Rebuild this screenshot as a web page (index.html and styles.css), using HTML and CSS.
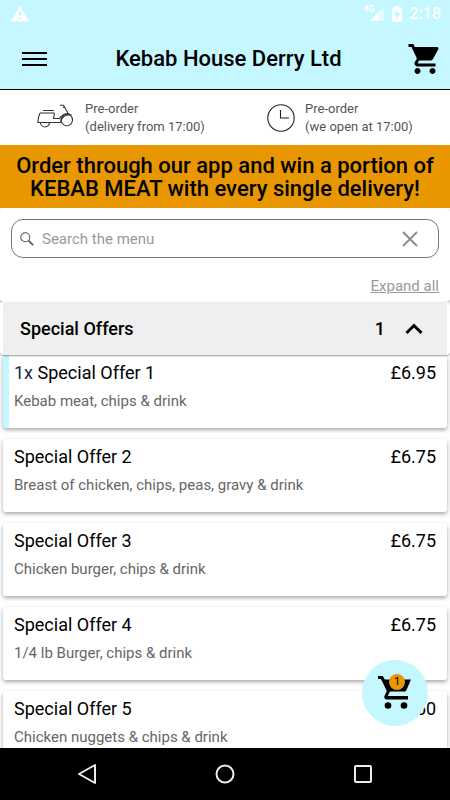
FILE: index.html
```html
<!DOCTYPE html>
<html lang="en">
<head>
<meta charset="utf-8">
<meta name="viewport" content="width=device-width, initial-scale=1">
<title>Kebab House Derry Ltd</title>
<link rel="stylesheet" href="styles.css">
</head>
<body>
<header class="top">
  <div class="status">
    <svg class="status-warning" width="18" height="16" viewBox="0 0 18 16" aria-hidden="true"><path fill="#fff" fill-rule="evenodd" d="M9 0l9 15.500H0zM8 5v5h2V5zm0 6.500v2h2v-2z"/></svg>
    <span class="network">4G</span>
    <svg class="status-signal" width="15" height="14" viewBox="0 0 15 14" aria-hidden="true"><path fill="#fff" opacity=".5" d="M15 0v14H1z"/><path fill="#fff" d="M10 5v9H1z"/></svg>
    <svg class="status-battery" width="10" height="16" viewBox="0 0 10 16" aria-hidden="true"><path fill="#fff" fill-rule="evenodd" d="M3 0h4v1.500h3V16H0V1.500h3zM6 3L1.800 9.300h2.700v4.400l3.900-6.400H6z"/></svg>
    <span class="clock">2:18</span>
  </div>
  <div class="appbar">
    <button class="icon-button" type="button" aria-label="Menu">
      <svg width="28" height="16" viewBox="0 0 28 16"><path stroke="#000" stroke-width="1.800" d="M0 2h25M0 8h25M0 14h25"/></svg>
    </button>
    <h1>Kebab House Derry Ltd</h1>
    <button class="icon-button cart" type="button" aria-label="Basket">
      <svg width="36" height="36" viewBox="0 0 24 24"><path d="M7 18c-1.100 0-1.990.9-1.990 2S5.900 22 7 22s2-.9 2-2-.9-2-2-2zM1 2v2h2l3.600 7.590-1.350 2.450c-.16.28-.25.61-.25.96 0 1.100.9 2 2 2h12v-2H7.420c-.14 0-.25-.11-.25-.25l.03-.12.9-1.630h7.450c.75 0 1.410-.41 1.750-1.030l3.580-6.490A1 1 0 0 0 20 4H5.210l-.94-2H1zm16 16c-1.100 0-1.990.9-1.990 2s.89 2 1.990 2 2-.9 2-2-.9-2-2-2z"/></svg>
    </button>
  </div>
</header>
<main class="content">
  <section class="times">
    <div class="time">
      <svg width="38" height="28" viewBox="0 0 38 28" fill="none" stroke="#333" stroke-width="1.100" aria-hidden="true"><path d="M6 6.500h11M3 9h14.500M3 9C1.500 12 1 15 .8 18.500h3M17.500 9l-1 5.500H22M12.500 18.500h11.300c0-5 4.200-8.500 11-7.500M22 15c2-3.500 6-5.800 10.500-5.500M23 1.200h3.500l4.500 8M26 3.500h2.500"/><path d="M3.500 18.500a4.500 4.500 0 0 0 9 0z"/><circle cx="29.800" cy="16" r="5.700"/></svg>
      <p>Pre-order<br>(delivery from 17:00)</p>
    </div>
    <div class="time">
      <svg width="28" height="28" viewBox="0 0 28 28" fill="none" stroke="#222" stroke-width="1.100" aria-hidden="true"><circle cx="14" cy="14" r="13.200"/><path d="M13.500 6v8H22"/></svg>
      <p>Pre-order<br>(we open at 17:00)</p>
    </div>
  </section>
  <p class="banner">Order through our app and win a portion of KEBAB MEAT with every single delivery!</p>
  <div class="tools">
    <form class="search" role="search">
      <svg width="14" height="14" viewBox="0 0 16 16" fill="none" stroke="#555" stroke-width="1.200" aria-hidden="true"><circle cx="6" cy="6" r="5.200"/><path stroke-width="1.800" d="M9.800 9.800L15 15"/></svg>
      <input type="text" placeholder="Search the menu" aria-label="Search the menu">
      <button class="icon-button" type="reset" aria-label="Clear search">
        <svg width="16" height="16" viewBox="0 0 16 16"><path stroke="#8a8a8a" stroke-width="1.800" d="M1 1l14 14M15 1L1 15"/></svg>
      </button>
    </form>
    <a class="expand" href="#offers">Expand all</a>
  </div>
  <section class="category" id="offers">
    <h2><button class="category-toggle" type="button" aria-expanded="true">
      <span class="category-name">Special Offers</span>
      <span>1</span>
      <svg width="18" height="12" viewBox="0 0 18 12" fill="none" aria-hidden="true"><path stroke="#000" stroke-width="3" d="M1.500 10L9 2.500l7.500 7.500"/></svg>
    </button></h2>
    <ul class="items">
      <li class="item selected">
        <div class="line"><h3><span class="qty">1x</span> Special Offer 1</h3><span>£6.95</span></div>
        <p>Kebab meat, chips &amp; drink</p>
      </li>
      <li class="item">
        <div class="line"><h3>Special Offer 2</h3><span>£6.75</span></div>
        <p>Breast of chicken, chips, peas, gravy &amp; drink</p>
      </li>
      <li class="item">
        <div class="line"><h3>Special Offer 3</h3><span>£6.75</span></div>
        <p>Chicken burger, chips &amp; drink</p>
      </li>
      <li class="item">
        <div class="line"><h3>Special Offer 4</h3><span>£6.75</span></div>
        <p>1/4 lb Burger, chips &amp; drink</p>
      </li>
      <li class="item">
        <div class="line"><h3>Special Offer 5</h3><span>£6.50</span></div>
        <p>Chicken nuggets &amp; chips &amp; drink</p>
      </li>
    </ul>
  </section>
</main>
<button class="fab" type="button" aria-label="Basket, 1 item">
  <svg width="34" height="34" viewBox="0 0 34 34"><path d="M0 0h4.800l2 3.500H33L28.500 14q-.5 1.500-2 1.500H12L9.800 20H30v3.500H8.500q-3-.8-2-3.800l2.300-4.700L3 3H0z"/><circle cx="10" cy="29.500" r="3.300"/><circle cx="26" cy="29.500" r="3.300"/></svg>
  <span class="badge">1</span>
</button>
<nav class="system" aria-label="System">
  <button class="icon-button" type="button" aria-label="Back"><svg width="20" height="22" viewBox="0 0 20 22" fill="none" stroke="#eee" stroke-width="2" stroke-linejoin="round"><path d="M18 2v18L2 11z"/></svg></button>
  <button class="icon-button" type="button" aria-label="Home"><svg width="20" height="20" viewBox="0 0 20 20" fill="none" stroke="#eee" stroke-width="2"><circle cx="10" cy="10" r="8.500"/></svg></button>
  <button class="icon-button" type="button" aria-label="Recent apps"><svg width="20" height="20" viewBox="0 0 20 20" fill="none" stroke="#eee" stroke-width="2"><rect x="2" y="2" width="16" height="16" rx="1"/></svg></button>
</nav>
</body>
</html>
```

FILE: styles.css
```css
* { box-sizing: border-box; }

body {
  margin: 0;
  height: 100vh;
  display: flex;
  flex-direction: column;
  background: #fff;
  color: #000;
  font-family: Roboto, "Liberation Sans", sans-serif;
  font-size: 18px;
  line-height: 24px;
}

h1, h2, h3, p, ul { margin: 0; padding: 0; font-weight: 400; }
button, input { font: inherit; color: inherit; }
svg { display: block; flex: none; }

.icon-button {
  display: flex;
  padding: 0;
  border: 0;
  background: none;
}

.top {
  flex: none;
  background: #c4f7ff;
  border-bottom: 1px solid #000;
}

.status {
  display: flex;
  align-items: center;
  height: 28px;
  padding: 0 9px 0 11px;
  color: #fff;
}

.status-warning { margin-right: auto; }
.status-signal { margin-left: -6px; }
.status-battery { margin: 0 8px; }
.clock { font-size: 16px; font-weight: 500; }

.network {
  align-self: flex-start;
  padding-top: 5px;
  font-size: 9px;
  font-weight: 700;
  line-height: 9px;
}

.appbar {
  display: flex;
  align-items: center;
  justify-content: space-between;
  height: 61px;
  padding: 0 7px 0 22px;
}

h1 {
  font-size: 22px;
  font-weight: 500;
  line-height: 26px;
}

.content {
  flex: 1;
  min-height: 0;
  overflow: hidden;
}

.times {
  display: flex;
  justify-content: space-around;
  padding: 10px 6px 9px;
}

.time {
  display: flex;
  align-items: center;
  gap: 10px;
  color: #555;
  font-size: 13px;
  font-weight: 500;
  line-height: 18px;
}

.banner {
  padding: 9px 12px 8px;
  background: #e89700;
  font-size: 22px;
  font-weight: 500;
  line-height: 23px;
  text-align: center;
}

.tools {
  display: flex;
  flex-direction: column;
  gap: 16px;
  padding: 11px 11px 4px;
  border-radius: 4px;
  box-shadow: 0 1px 2px rgba(0, 0, 0, 0.4);
}

.search {
  display: flex;
  align-items: center;
  gap: 8px;
  height: 39px;
  padding: 0 20px 0 8px;
  border: 1px solid #777;
  border-radius: 12px;
}

.search input {
  flex: 1;
  min-width: 0;
  padding: 0;
  border: 0;
  outline: 0;
  background: none;
  font-size: 15px;
}

.search input::placeholder { color: #999; opacity: 1; }

.expand {
  align-self: flex-end;
  color: #999;
  font-size: 15px;
}

.category-toggle {
  display: flex;
  align-items: center;
  gap: 20px;
  width: 100%;
  height: 53px;
  padding: 0 24px 0 17px;
  border: 0;
  border-left: 3px solid #fff;
  border-right: 3px solid #fff;
  border-radius: 4px;
  background: #efefef;
  box-shadow: 0 1px 2px rgba(0, 0, 0, 0.4);
  font-weight: 500;
  text-align: left;
}

.category h2 { position: relative; font-size: 18px; }
.category-name { flex: 1; }

.items {
  display: grid;
  gap: 11px;
  padding: 0 3px;
  list-style: none;
}

.item {
  height: 73px;
  padding: 6px 11px;
  border-radius: 3px;
  background: #fff;
  box-shadow: 0 2px 4px rgba(0, 0, 0, 0.35);
}

.item p {
  margin-top: 4px;
  color: #666;
  font-size: 15px;
}

.selected {
  padding-left: 5px;
  border-left: 6px solid #c4f7ff;
}

.line {
  display: flex;
  justify-content: space-between;
}

h3 { font-size: 18px; }
.qty { color: #14284b; }

.fab {
  position: fixed;
  right: 22px;
  bottom: 74px;
  display: grid;
  place-items: center;
  width: 66px;
  height: 66px;
  padding: 0;
  border: 0;
  border-radius: 50%;
  background: #c4f7ff;
}

.badge {
  position: absolute;
  top: 14px;
  left: 27px;
  width: 16px;
  height: 16px;
  border-radius: 50%;
  background: #e89700;
  font-size: 11px;
  line-height: 16px;
}

.system {
  display: flex;
  align-items: center;
  justify-content: space-around;
  flex: none;
  height: 52px;
  padding: 0 18px;
  background: #000;
}
```
